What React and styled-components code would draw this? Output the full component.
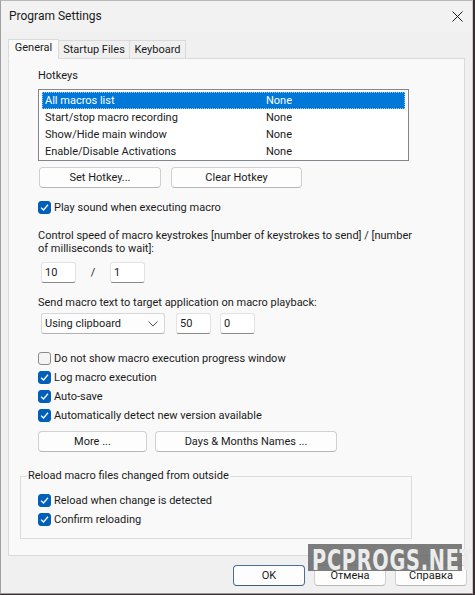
import React from "react";
import styled, { createGlobalStyle } from "styled-components";

const GlobalStyle = createGlobalStyle`
  html, body {
    margin: 0;
    padding: 0;
    background: #3a2c30;
  }
  body {
    font-family: Roboto, "Noto Sans", sans-serif;
    font-size: 11px;
    color: #1b1b1b;
  }
`;

const hotkeys = [
  { name: "All macros list", key: "None" },
  { name: "Start/stop macro recording", key: "None" },
  { name: "Show/Hide main window", key: "None" },
  { name: "Enable/Disable Activations", key: "None" },
];

function Check({ checked, children }) {
  return (
    <CheckRow>
      <Box checked={checked}>
        {checked && (
          <svg width="9" height="9" viewBox="0 0 9 9">
            <path d="M1 4.6 L3.5 7 L8 1.8" fill="none" stroke="#fff" strokeWidth="1.3" />
          </svg>
        )}
      </Box>
      <span>{children}</span>
    </CheckRow>
  );
}

function App() {
  return (
    <>
      <GlobalStyle />
      <Window>
        <TitleBar>
          <span>Program Settings</span>
          <svg width="11" height="11" viewBox="0 0 11 11">
            <path d="M0.5 0.5 L10.5 10.5 M10.5 0.5 L0.5 10.5" stroke="#1b1b1b" strokeWidth="1" />
          </svg>
        </TitleBar>

        <Tabs>
          <Tab active width={51}>General</Tab>
          <Tab width={71}>Startup Files</Tab>
          <Tab width={56}>Keyboard</Tab>
        </Tabs>

        <Panel>
          <Main>
            <Label>Hotkeys</Label>
            <ListBox>
              {hotkeys.map((h, i) => (
                <ListRow key={h.name} selected={i === 0}>
                  <NameCell>{h.name}</NameCell>
                  <span>{h.key}</span>
                </ListRow>
              ))}
            </ListBox>

            <ButtonRow gap={10} top={6} left={1}>
              <Button width={122}>Set Hotkey...</Button>
              <Button width={131}>Clear Hotkey</Button>
            </ButtonRow>

            <Spacer h={10} />
            <Check checked>Play sound when executing macro</Check>

            <Paragraph>
              Control speed of macro keystrokes [number of keystrokes to send] / [number
              of milliseconds to wait]:
            </Paragraph>

            <FieldRow top={7}>
              <Input width={35} defaultValue="10" />
              <Slash>/</Slash>
              <Input width={35} defaultValue="1" />
            </FieldRow>

            <Label top={12}>Send macro text to target application on macro playback:</Label>

            <FieldRow top={2}>
              <Select>
                <span>Using clipboard</span>
                <svg width="10" height="6" viewBox="0 0 10 6">
                  <path d="M0.5 0.5 L5 5 L9.5 0.5" fill="none" stroke="#555" strokeWidth="1" />
                </svg>
              </Select>
              <Input width={35} defaultValue="50" />
              <Input width={35} defaultValue="0" />
            </FieldRow>

            <Spacer h={15} />
            <Check>Do not show macro execution progress window</Check>
            <Check checked>Log macro execution</Check>
            <Check checked>Auto-save</Check>
            <Check checked>Automatically detect new version available</Check>

            <ButtonRow gap={8} top={6} left={0}>
              <Button width={109}>More ...</Button>
              <Button width={182}>Days &amp; Months Names ...</Button>
            </ButtonRow>
          </Main>

          <Group>
            <Legend>Reload macro files changed from outside</Legend>
            <GroupBody>
              <Check checked>Reload when change is detected</Check>
              <Check checked>Confirm reloading</Check>
            </GroupBody>
          </Group>
        </Panel>

        <Footer>
          <Button width={72} primary>OK</Button>
          <Button width={72}>Отмена</Button>
          <Button width={72}>Справка</Button>
        </Footer>

        <Watermark>
          <span>PCPROGS.NET</span>
        </Watermark>
      </Window>
    </>
  );
}

const Window = styled.div`
  position: relative;
  width: 471px;
  height: 592px;
  background: #f0f0f0;
  border-left: 1px solid #a0a0a0;
  border-right: 1px solid #c8c8c8;
  border-bottom: 1px solid #9a9a9a;
  border-top: 1px solid #b8b8b8;
  display: flex;
  flex-direction: column;
  overflow: hidden;
`;

const TitleBar = styled.div`
  height: 31px;
  display: flex;
  align-items: center;
  justify-content: space-between;
  padding: 0 9px 0 8px;
  font-size: 12px;
  background: #f2f2f2;

  span {
    margin-top: -1px;
  }
`;

const Tabs = styled.div`
  display: flex;
  align-items: flex-end;
  height: 26px;
  margin-left: 7px;
`;

const Tab = styled.div`
  width: ${(p) => p.width}px;
  height: ${(p) => (p.active ? 20 : 18)}px;
  box-sizing: border-box;
  display: flex;
  align-items: center;
  justify-content: center;
  background: ${(p) => (p.active ? "#f9f9f9" : "#f0f0f0")};
  border: 1px solid #dadada;
  border-bottom: ${(p) => (p.active ? "1px solid #f9f9f9" : "none")};
  border-left: ${(p) => (p.active ? "1px solid #dadada" : "none")};
  margin-bottom: ${(p) => (p.active ? -1 : 0)}px;
  padding-bottom: ${(p) => (p.active ? 3 : 0)}px;
  position: relative;
  z-index: ${(p) => (p.active ? 1 : 0)};
`;

const Panel = styled.div`
  margin: 0 7px;
  height: 498px;
  box-sizing: border-box;
  background: #f9f9f9;
  border: 1px solid #dadada;
  padding: 0 0 0 11px;
`;

const Main = styled.div`
  padding: 9px 0 0 18px;
`;

const Label = styled.div`
  line-height: 16px;
  margin-top: ${(p) => p.top || 0}px;
`;

const ListBox = styled.div`
  margin-top: 5px;
  width: 371px;
  height: 72px;
  box-sizing: border-box;
  background: #fff;
  border: 1px solid #82868c;
  padding: 2px 3px 0 3px;
`;

const ListRow = styled.div`
  height: 17px;
  display: flex;
  align-items: center;
  padding-left: 3px;
  box-sizing: border-box;
  background: ${(p) => (p.selected ? "#0078d7" : "transparent")};
  color: ${(p) => (p.selected ? "#fff" : "#1b1b1b")};
  outline: ${(p) => (p.selected ? "1px dotted #9cc8f0" : "none")};
  outline-offset: -1px;
`;

const NameCell = styled.span`
  width: 221px;
`;

const ButtonRow = styled.div`
  display: flex;
  gap: ${(p) => p.gap}px;
  margin-top: ${(p) => p.top}px;
  margin-left: ${(p) => p.left}px;
`;

const Button = styled.div`
  width: ${(p) => p.width}px;
  height: 21px;
  box-sizing: border-box;
  display: flex;
  align-items: center;
  justify-content: center;
  background: #fdfdfd;
  border: 1px solid ${(p) => (p.primary ? "#4a6f94" : "#d0d0d0")};
  border-bottom-color: ${(p) => (p.primary ? "#3d5f80" : "#b8b8b8")};
  border-radius: 4px;
  color: #1b1b1b;
`;

const Spacer = styled.div`
  height: ${(p) => p.h}px;
`;

const CheckRow = styled.div`
  height: 19px;
  display: flex;
  align-items: center;
  gap: 3px;
`;

const Box = styled.div`
  width: 13px;
  height: 13px;
  box-sizing: border-box;
  border-radius: 3px;
  display: flex;
  align-items: center;
  justify-content: center;
  background: ${(p) => (p.checked ? "#005fb8" : "#f4f4f4")};
  border: 1px solid ${(p) => (p.checked ? "#005fb8" : "#8c8c8c")};
`;

const Paragraph = styled.div`
  margin-top: 12px;
  line-height: 13px;
  width: 382px;
`;

const FieldRow = styled.div`
  display: flex;
  align-items: center;
  gap: 9px;
  margin-top: ${(p) => p.top}px;
  margin-left: 3px;
`;

const Input = styled.input`
  width: ${(p) => p.width}px;
  height: 21px;
  box-sizing: border-box;
  border: 1px solid #e3e3e3;
  border-bottom: 1px solid #8a8a8a;
  border-radius: 3px;
  background: #fff;
  font: inherit;
  color: #1b1b1b;
  padding: 0 3px;
  outline: none;
`;

const Slash = styled.span`
  width: 16px;
  text-align: center;
`;

const Select = styled.div`
  width: 124px;
  height: 21px;
  box-sizing: border-box;
  display: flex;
  align-items: center;
  justify-content: space-between;
  padding: 0 6px 0 3px;
  background: #fdfdfd;
  border: 1px solid #d6d6d6;
  border-bottom-color: #b0b0b0;
  border-radius: 3px;
  margin-right: 2px;
`;

const Group = styled.fieldset`
  margin: 17px 0 0 0;
  width: 392px;
  box-sizing: border-box;
  border: 1px solid #dcdcdc;
  padding: 0;
`;

const Legend = styled.legend`
  margin-left: 6px;
  padding: 0 1px;
  line-height: 14px;
`;

const GroupBody = styled.div`
  padding: 8px 0 9px 17px;
`;

const Footer = styled.div`
  display: flex;
  justify-content: flex-end;
  gap: 9px;
  margin-top: 9px;
  padding-right: 5px;
`;

const Watermark = styled.div`
  position: absolute;
  left: 307px;
  top: 543px;
  width: 154px;
  height: 27px;
  background: rgba(96, 96, 96, 0.82);
  overflow: visible;

  span {
    display: inline-block;
    color: #ececec;
    font-family: "DejaVu Sans Condensed", "DejaVu Sans", sans-serif;
    font-weight: bold;
    font-size: 29px;
    line-height: 29px;
    letter-spacing: 1px;
    white-space: nowrap;
    margin: 2px 0 0 4px;
    transform: scaleX(0.74);
    transform-origin: left top;
  }
`;

export default App;
